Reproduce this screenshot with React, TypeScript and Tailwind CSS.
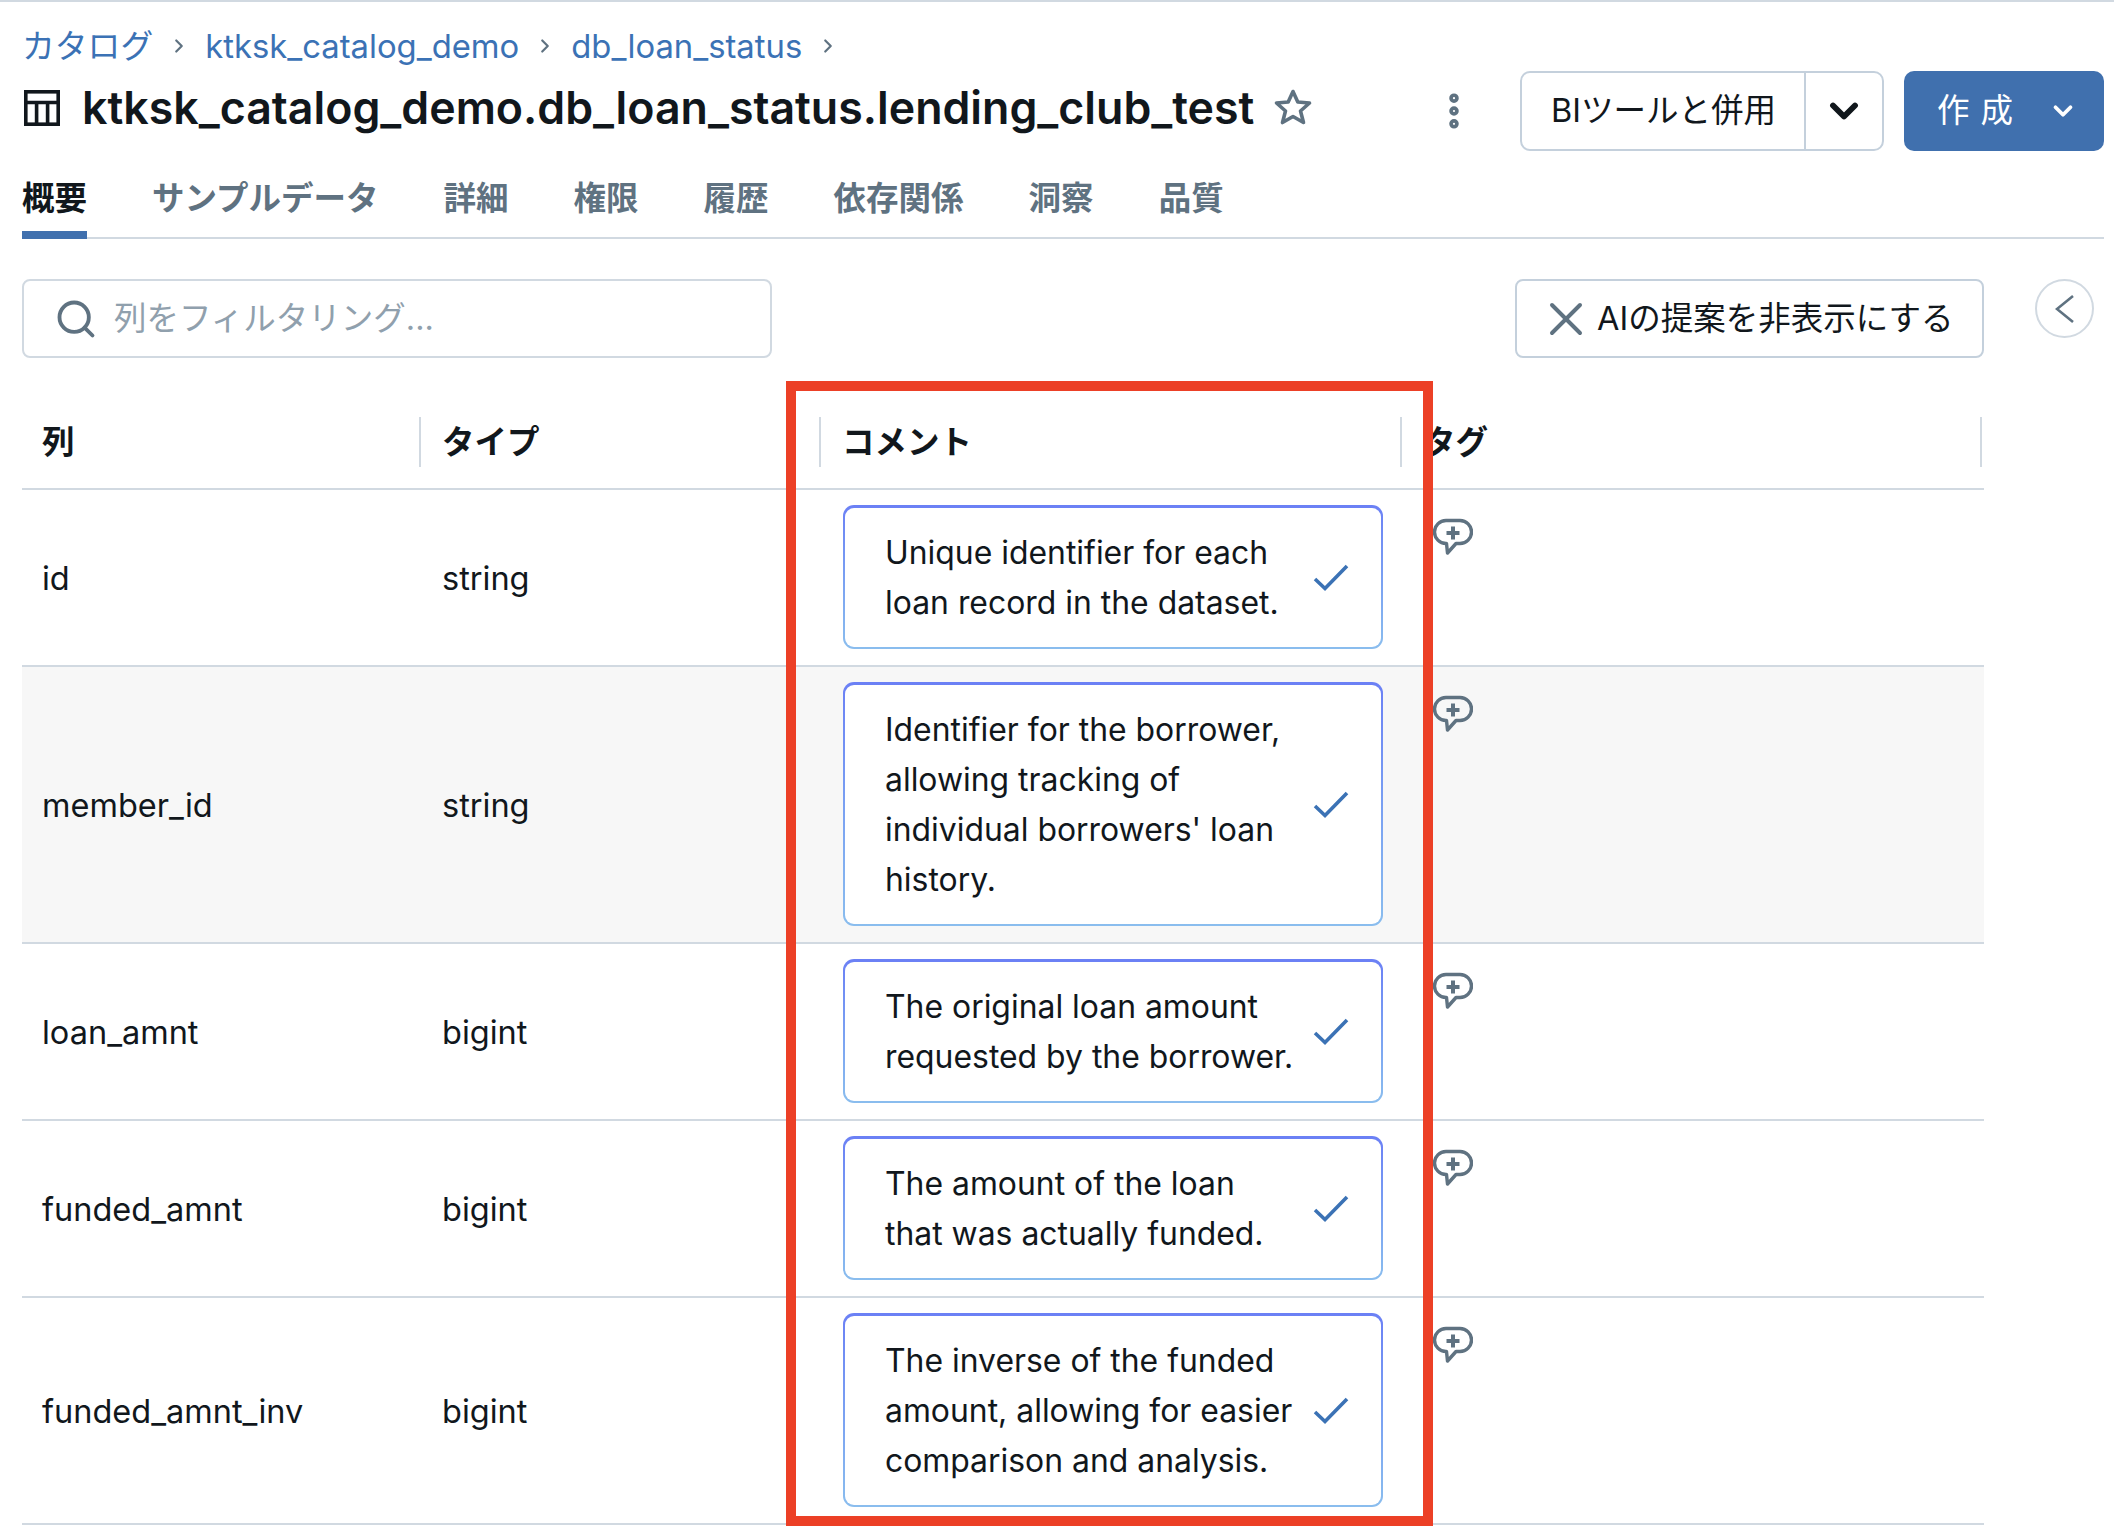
import { ChevronDown, ChevronRight, EllipsisVertical, Search, X } from "lucide-react";

const font = "font-['Inter','Noto_Sans_CJK_JP',sans-serif]";

const tabs = ["概要", "サンプルデータ", "詳細", "権限", "履歴", "依存関係", "洞察", "品質"];

const rows = [
  { name: "id", type: "string", lines: ["Unique identifier for each", "loan record in the dataset."] },
  {
    name: "member_id",
    type: "string",
    lines: ["Identifier for the borrower,", "allowing tracking of", "individual borrowers' loan", "history."],
    shaded: true,
  },
  { name: "loan_amnt", type: "bigint", lines: ["The original loan amount", "requested by the borrower."] },
  { name: "funded_amnt", type: "bigint", lines: ["The amount of the loan", "that was actually funded."] },
  {
    name: "funded_amnt_inv",
    type: "bigint",
    lines: ["The inverse of the funded", "amount, allowing for easier", "comparison and analysis."],
  },
];

function TableIcon() {
  return (
    <svg width="36" height="36" viewBox="0 0 36 36" fill="none" stroke="#11171c" strokeWidth="3.6" className="shrink-0">
      <rect x="1.8" y="1.8" width="32.4" height="32.4" />
      <path d="M2 12.5H34M12.6 12.5V34M23.6 12.5V34" />
    </svg>
  );
}

function StarIcon() {
  return (
    <svg width="40" height="38" viewBox="0 0 40 38" fill="none" stroke="#5f7281" strokeWidth="3.6" strokeLinejoin="round" className="shrink-0">
      <polygon points="20,3.5 24.8,14 36.5,15 27.5,23 30.5,34.5 20,28.5 9.5,34.5 12.5,23 3.5,15 15.2,14" />
    </svg>
  );
}

function AddCommentIcon() {
  return (
    <svg width="40" height="38" viewBox="0 0 40 38" fill="none" stroke="#5f7281" className="block">
      <path
        d="M13 2.5H27A11.5 11.5 0 0 1 27 25.5H23L14.5 35L13.5 25.5H13A11.5 11.5 0 0 1 13 2.5Z"
        strokeWidth="3.4"
        strokeLinejoin="round"
      />
      <path d="M20 8.5V21.5M13.5 15H26.5" strokeWidth="4" />
    </svg>
  );
}

function CheckIcon() {
  return (
    <svg width="36" height="28" viewBox="0 0 36 28" fill="none" stroke="#3b72b5" strokeWidth="3.6" className="shrink-0">
      <path d="M2 15L12 24.5L34 2" />
    </svg>
  );
}

function Crumb({ label }: { label: string }) {
  return (
    <>
      <span>{label}</span>
      <ChevronRight className="w-[22px] h-[22px] text-[#5f7281] mx-[15px]" strokeWidth={2.4} />
    </>
  );
}

function HeadCell({ label, sep = true, last = false }: { label: string; sep?: boolean; last?: boolean }) {
  return (
    <div className="flex items-center h-[92px] font-semibold">
      {sep && <div className="w-[2px] h-[50px] bg-[#d1d9e1] shrink-0" />}
      <span className={sep ? "ml-[21px] pt-[2px]" : "ml-[20px] pt-[2px]"}>{label}</span>
      {last && <div className="w-[2px] h-[50px] bg-[#d1d9e1] ml-auto mr-[2px]" />}
    </div>
  );
}

export default function App() {
  return (
    <div className={`${font} relative h-[1534px] w-full overflow-hidden bg-white text-[32.5px] leading-[50px] text-[#11171c] border-t-2 border-[#d1d9e1]`}>
      <div className="pl-[22px] pr-[10px]">
        <nav className="flex items-center h-[50px] mt-[19px] text-[32.8px] text-[#3b72b5]">
          <Crumb label="カタログ" />
          <Crumb label="ktksk_catalog_demo" />
          <Crumb label="db_loan_status" />
        </nav>

        <header className="flex items-center h-[80px]">
          <div className="flex items-center mb-[7px]">
            <div className="ml-[2px]">
              <TableIcon />
            </div>
            <h1 className="ml-[22px] text-[44.7px] leading-[60px] font-semibold whitespace-nowrap">
              ktksk_catalog_demo.db_loan_status.lending_club_test
            </h1>
            <div className="ml-[19px] mb-[2px]">
              <StarIcon />
            </div>
          </div>
          <EllipsisVertical className="w-[44px] h-[44px] ml-[119px] text-[#5f7281]" strokeWidth={3.2} />
          <div className="ml-auto flex items-stretch h-[80px] border-2 border-[#c4d0dc] rounded-[10px]">
            <div className="flex items-center pl-[29px] pr-[28px] border-r-2 border-[#c4d0dc]">BIツールと併用</div>
            <div className="flex items-center justify-center w-[76px]">
              <ChevronDown className="w-[44px] h-[44px]" strokeWidth={3.2} />
            </div>
          </div>
          <button className="ml-[20px] flex items-center h-[80px] w-[200px] rounded-[10px] bg-[#4070ae] text-white pl-[33px]">
            <span className="tracking-[11px]">作成</span>
            <ChevronDown className="w-[30px] h-[30px] ml-[24px]" strokeWidth={3} />
          </button>
        </header>

        <div className="flex gap-[65px] h-[87px] mt-[1px] pt-[22px] border-b-2 border-[#d1d9e1] font-semibold text-[#5f7281]">
          {tabs.map((t, i) => (
            <div
              key={t}
              className={i === 0 ? "h-[65px] border-b-[8px] border-[#4070ae] text-[#11171c] leading-[50px]" : "leading-[50px]"}
            >
              {t}
            </div>
          ))}
        </div>

        <div className="flex items-start mt-[40px]">
          <div className="flex items-center w-[750px] h-[79px] border-2 border-[#d1d9e1] rounded-[8px] pl-[30px]">
            <Search className="w-[44px] h-[44px] text-[#5f7281]" strokeWidth={2.1} />
            <span className="ml-[16px] text-[#90a0ad]">列をフィルタリング...</span>
          </div>
          <div className="flex items-center ml-[743px] w-[469px] h-[79px] border-2 border-[#c4d0dc] rounded-[8px] pl-[21px] whitespace-nowrap">
            <X className="w-[56px] h-[56px] text-[#5f7281] shrink-0" strokeWidth={1.7} />
            <span className="ml-[3px]">AIの提案を非表示にする</span>
          </div>
          <div className="flex items-center justify-center ml-[51px] w-[59px] h-[59px] rounded-full border-2 border-[#d1d9e1]">
            <svg width="20" height="30" viewBox="0 0 20 30" fill="none" stroke="#5f7281" strokeWidth="2.6">
              <path d="M18 2L2 15L18 28" />
            </svg>
          </div>
        </div>

        <div className="w-[1962px] mt-[38px]">
          <div className="grid grid-cols-[397px_400px_581px_1fr] border-b-2 border-[#d1d9e1]">
            <HeadCell label="列" sep={false} />
            <HeadCell label="タイプ" />
            <HeadCell label="コメント" />
            <HeadCell label="タグ" last />
          </div>
          {rows.map((row) => (
            <div
              key={row.name}
              className={`grid grid-cols-[397px_400px_581px_1fr] border-b-2 border-[#d1d9e1] ${row.shaded ? "bg-[#f7f7f7]" : ""}`}
            >
              <div className="flex items-center pl-[20px] pt-[2px]">{row.name}</div>
              <div className="flex items-center pl-[23px] pt-[2px]">{row.type}</div>
              <div className="pt-[15px] pb-[16px] pl-[24px]">
                <div className="w-[540px] p-[2px] pt-[3px] rounded-[11px] bg-linear-to-b from-[#6b80f5] to-[#8abdee]">
                  <div className="flex items-center bg-white rounded-[9px] pl-[40px] pr-[32px] pt-[20px] pb-[19px] text-[31.9px]">
                    <div className="flex-1 whitespace-nowrap">
                      {row.lines.map((l) => (
                        <div key={l}>{l}</div>
                      ))}
                    </div>
                    <CheckIcon />
                  </div>
                </div>
              </div>
              <div className="pl-[33px] pt-[28px]">
                <AddCommentIcon />
              </div>
            </div>
          ))}
        </div>
      </div>

      {/* red highlight drawn on top of the comment column */}
      <div className="absolute left-[786px] top-[379px] w-[647px] h-[1145px] border-[10px] border-[#ec4026]" />
    </div>
  );
}
